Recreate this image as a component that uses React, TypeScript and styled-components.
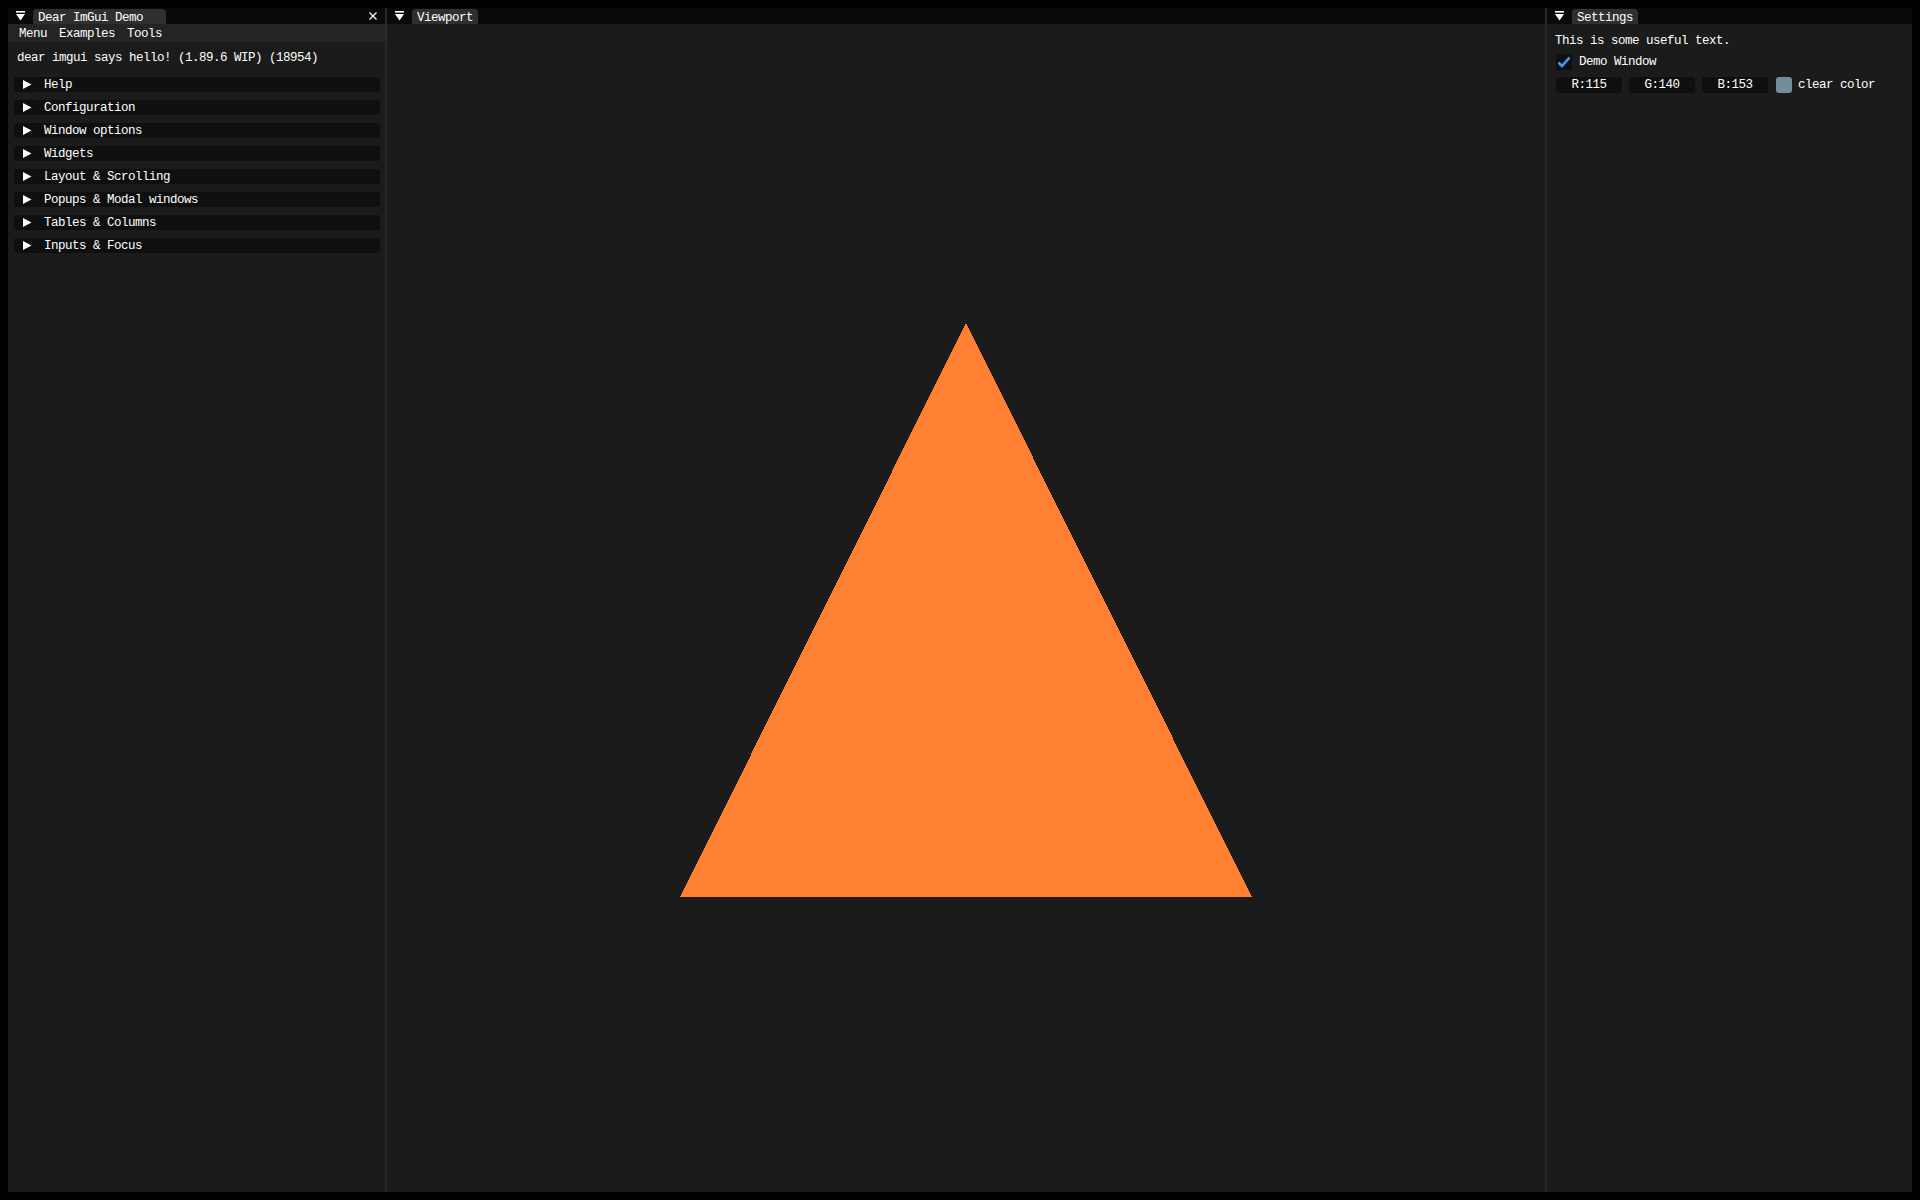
import React from "react";
import styled, { createGlobalStyle } from "styled-components";

const GlobalStyle = createGlobalStyle`
  html, body { margin: 0; padding: 0; background: #000; }
  body {
    font-family: "Liberation Mono", "DejaVu Sans Mono", monospace;
    color: #ffffff;
    font-size: 12.5px;
    letter-spacing: -0.5px;
  }
  * { box-sizing: border-box; }
`;

const Screen = styled.div`
  width: 1920px;
  height: 1200px;
  padding: 8px;
  background: #000;
  overflow: hidden;
`;

const Dock = styled.div`
  display: flex;
  height: 100%;
`;

const Window = styled.section<{ $w?: number }>`
  ${(p) => (p.$w ? `width: ${p.$w}px; flex: none;` : "flex: 1; min-width: 0;")}
  display: flex;
  flex-direction: column;
  background: #1b1b1b;
`;

const Splitter = styled.div`
  width: 2px;
  flex: none;
  background: #2a2a2a;
`;

const TabBar = styled.div`
  height: 16px;
  flex: none;
  display: flex;
  align-items: flex-end;
  background: #0a0a0a;
  padding: 0 8px;
`;

const MenuButton = styled.span`
  width: 9px;
  height: 16px;
  margin-right: 8px;
  display: flex;
  align-items: center;
  align-self: stretch;
  svg { display: block; }
`;

const Tab = styled.div<{ $minW?: number }>`
  height: 15px;
  min-width: ${(p) => p.$minW ?? 0}px;
  padding: 2.5px 5px 0;
  background: #2f2f2f;
  border-radius: 4px 4px 0 0;
  line-height: 13px;
  white-space: nowrap;
`;

const CloseButton = styled.span`
  margin-left: auto;
  align-self: center;
  width: 8px;
  height: 8px;
  svg { display: block; }
`;

const MenuBar = styled.div`
  height: 18px;
  flex: none;
  display: flex;
  background: #242424;
  padding: 2.5px 0 0 5px;
  line-height: 15.5px;
`;

const MenuItem = styled.span`
  padding: 0 6px;
  white-space: nowrap;
`;

const Body = styled.div<{ $pad: string }>`
  flex: 1;
  min-height: 0;
  display: flex;
  flex-direction: column;
  padding: ${(p) => p.$pad};
`;

const TextLine = styled.div<{ $indent?: number }>`
  line-height: 13px;
  margin-left: ${(p) => p.$indent ?? 0}px;
  white-space: nowrap;
`;

const HeaderList = styled.div`
  display: flex;
  flex-direction: column;
  gap: 8px;
  margin-top: 12px;
`;

const Header = styled.div`
  height: 15px;
  display: flex;
  align-items: center;
  background: #0f0f0f;
  border-radius: 3px;
  padding-left: 9px;
`;

const Arrow = styled.svg`
  width: 9px;
  height: 9px;
  flex: none;
  margin-right: 12px;
  display: block;
`;

const HeaderLabel = styled.span`
  line-height: 13px;
  padding-top: 2px;
  white-space: nowrap;
`;

const CheckRow = styled.div`
  display: flex;
  align-items: center;
  height: 16px;
  margin-top: 6px;
  margin-left: 1px;
`;

const CheckBox = styled.span`
  width: 16px;
  height: 16px;
  border-radius: 3px;
  background: #0f0f0f;
  margin-right: 7px;
  svg { display: block; }
`;

const RowLabel = styled.span`
  line-height: 16px;
  padding-top: 1.5px;
  white-space: nowrap;
`;

const FieldRow = styled.div`
  display: flex;
  align-items: center;
  height: 16px;
  margin-top: 7px;
  margin-left: 1px;
  gap: 7px;
`;

const Field = styled.span`
  width: 66px;
  height: 16px;
  border-radius: 3px;
  background: #0f0f0f;
  text-align: center;
  line-height: 17px;
`;

const Swatch = styled.span<{ $c: string }>`
  width: 16px;
  height: 16px;
  margin-left: 1px;
  margin-right: -1px;
  border-radius: 3px;
  background: ${(p) => p.$c};
`;

const Canvas = styled.div`
  flex: 1;
  display: flex;
  flex-direction: column;
  align-items: center;
  padding-top: 299px;
  svg { display: block; }
`;

const WinMenuIcon = () => (
  <MenuButton>
    <svg width="9" height="10" viewBox="0 0 9 10">
      <rect x="0" y="0" width="9" height="1.6" fill="#fff" />
      <polygon points="0,3 9,3 4.5,9.5" fill="#fff" />
    </svg>
  </MenuButton>
);

const HeaderRow = ({ label }: { label: string }) => (
  <Header>
    <Arrow viewBox="0 0 9 9">
      <polygon points="0,0 8.5,4.5 0,9" fill="#fff" />
    </Arrow>
    <HeaderLabel>{label}</HeaderLabel>
  </Header>
);

const headers = [
  "Help",
  "Configuration",
  "Window options",
  "Widgets",
  "Layout & Scrolling",
  "Popups & Modal windows",
  "Tables & Columns",
  "Inputs & Focus",
];

export default function App() {
  return (
    <>
      <GlobalStyle />
      <Screen>
        <Dock>
          <Window $w={377}>
            <TabBar>
              <WinMenuIcon />
              <Tab $minW={133}>Dear ImGui Demo</Tab>
              <CloseButton>
                <svg width="8" height="8" viewBox="0 0 8 8">
                  <path d="M0.5 0.5 L7.5 7.5 M7.5 0.5 L0.5 7.5" stroke="#fff" strokeWidth="1.2" />
                </svg>
              </CloseButton>
            </TabBar>
            <MenuBar>
              <MenuItem>Menu</MenuItem>
              <MenuItem>Examples</MenuItem>
              <MenuItem>Tools</MenuItem>
            </MenuBar>
            <Body $pad="10px 5px 0 6px">
              <TextLine $indent={3}>dear imgui says hello! (1.89.6 WIP) (18954)</TextLine>
              <HeaderList>
                {headers.map((h) => (
                  <HeaderRow key={h} label={h} />
                ))}
              </HeaderList>
            </Body>
          </Window>
          <Splitter />
          <Window>
            <TabBar>
              <WinMenuIcon />
              <Tab>Viewport</Tab>
            </TabBar>
            <Canvas>
              <svg width="572" height="574" viewBox="0 0 572 574" shapeRendering="crispEdges">
                <polygon points="0,574 572,574 286,0" fill="#ff8033" />
              </svg>
            </Canvas>
          </Window>
          <Splitter />
          <Window $w={365}>
            <TabBar>
              <WinMenuIcon />
              <Tab>Settings</Tab>
            </TabBar>
            <Body $pad="10.5px 8px 0 8px">
              <TextLine>This is some useful text.</TextLine>
              <CheckRow>
                <CheckBox>
                  <svg width="16" height="16" viewBox="0 0 16 16">
                    <polyline
                      points="2.5,8.5 6,12 13.5,3.5"
                      fill="none"
                      stroke="#4296fa"
                      strokeWidth="2.6"
                    />
                  </svg>
                </CheckBox>
                <RowLabel>Demo Window</RowLabel>
              </CheckRow>
              <FieldRow>
                <Field>R:115</Field>
                <Field>G:140</Field>
                <Field>B:153</Field>
                <Swatch $c="#738c99" />
                <RowLabel>clear color</RowLabel>
              </FieldRow>
            </Body>
          </Window>
        </Dock>
      </Screen>
    </>
  );
}
